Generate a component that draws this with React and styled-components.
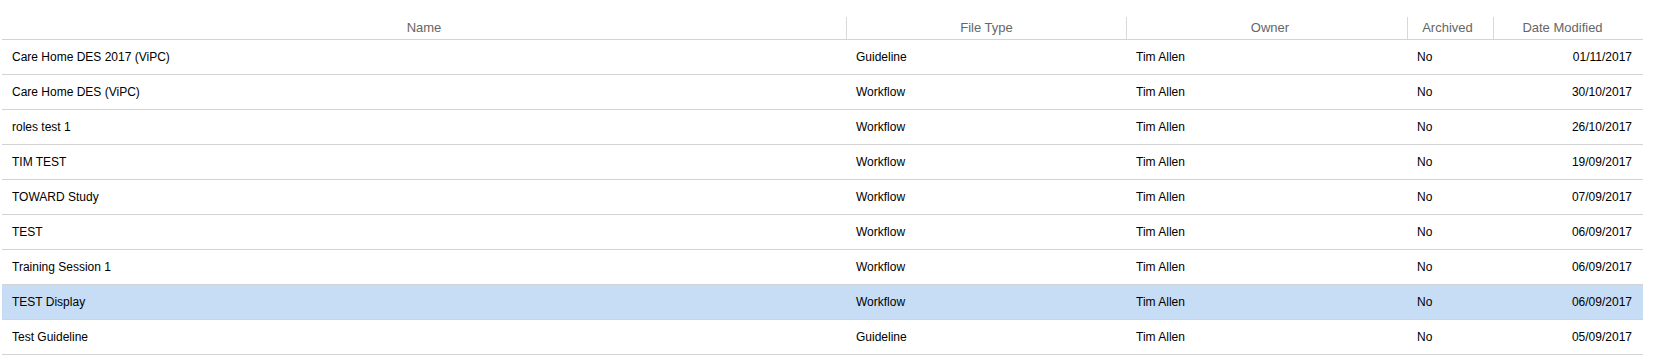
import React from 'react'
import { styled, createGlobalStyle } from 'styled-components'

const GlobalStyle = createGlobalStyle`
  html, body {
    margin: 0;
    padding: 0;
    background: #ffffff;
  }
  body {
    font-family: "Liberation Sans", Arial, sans-serif;
  }
`;

const files = [
  { name: 'Care Home DES 2017 (ViPC)', type: 'Guideline', owner: 'Tim Allen', archived: 'No', date: '01/11/2017' },
  { name: 'Care Home DES (ViPC)', type: 'Workflow', owner: 'Tim Allen', archived: 'No', date: '30/10/2017' },
  { name: 'roles test 1', type: 'Workflow', owner: 'Tim Allen', archived: 'No', date: '26/10/2017' },
  { name: 'TIM TEST', type: 'Workflow', owner: 'Tim Allen', archived: 'No', date: '19/09/2017' },
  { name: 'TOWARD Study', type: 'Workflow', owner: 'Tim Allen', archived: 'No', date: '07/09/2017' },
  { name: 'TEST', type: 'Workflow', owner: 'Tim Allen', archived: 'No', date: '06/09/2017' },
  { name: 'Training Session 1', type: 'Workflow', owner: 'Tim Allen', archived: 'No', date: '06/09/2017' },
  { name: 'TEST Display', type: 'Workflow', owner: 'Tim Allen', archived: 'No', date: '06/09/2017', selected: true },
  { name: 'Test Guideline', type: 'Guideline', owner: 'Tim Allen', archived: 'No', date: '05/09/2017' },
];

// shift: small nudge of the header label off centre, as in the original grid
const columns = [
  { label: 'Name', shift: 0 },
  { label: 'File Type', shift: 0 },
  { label: 'Owner', shift: 3 },
  { label: 'Archived', shift: -3 },
  { label: 'Date Modified', shift: -6 },
];

const App = () => {
  return (
    <>
      <GlobalStyle />
      <Page>
        <Table>
          <HeaderRow>
            {columns.map((c, i) => (
              <HeaderCell key={c.label} $first={i === 0} $shift={c.shift}>{c.label}</HeaderCell>
            ))}
          </HeaderRow>
          {files.map((f, i) => (
            <Row key={i} $selected={f.selected}>
              <Cell>{f.name}</Cell>
              <Cell>{f.type}</Cell>
              <Cell>{f.owner}</Cell>
              <Cell>{f.archived}</Cell>
              <Cell $right>{f.date}</Cell>
            </Row>
          ))}
        </Table>
      </Page>
    </>
  )
}

const Page = styled.div`
    padding: 0 10px 0 2px;
`;

const Table = styled.div`
    width: 1641px;
    display: flex;
    flex-direction: column;
`;

const grid = `
    display: grid;
    grid-template-columns: 844px 280px 281px 86px 150px;
`;

const HeaderRow = styled.div`
    ${grid}
    height: 39px;
    border-bottom: 1px solid #d3d3d3;
    align-items: end;
`;

const HeaderCell = styled.div`
    height: 22px;
    line-height: 21px;
    text-align: center;
    font-size: 13px;
    color: #666666;
    border-left: ${p => (p.$first ? 'none' : '1px solid #d9d9d9')};
    padding-left: ${p => Math.max(p.$shift * 2, 0)}px;
    padding-right: ${p => Math.max(-p.$shift * 2, 0)}px;
`;

const Row = styled.div`
    ${grid}
    height: 34px;
    border-bottom: 1px solid #d3d3d3;
    align-items: center;
    background: ${p => (p.$selected ? '#c7ddf5' : '#ffffff')};
`;

const Cell = styled.div`
    padding: 0 11px 1px 10px;
    font-size: 12px;
    color: #000000;
    text-align: ${p => (p.$right ? 'right' : 'left')};
    white-space: nowrap;
`;

export default App
